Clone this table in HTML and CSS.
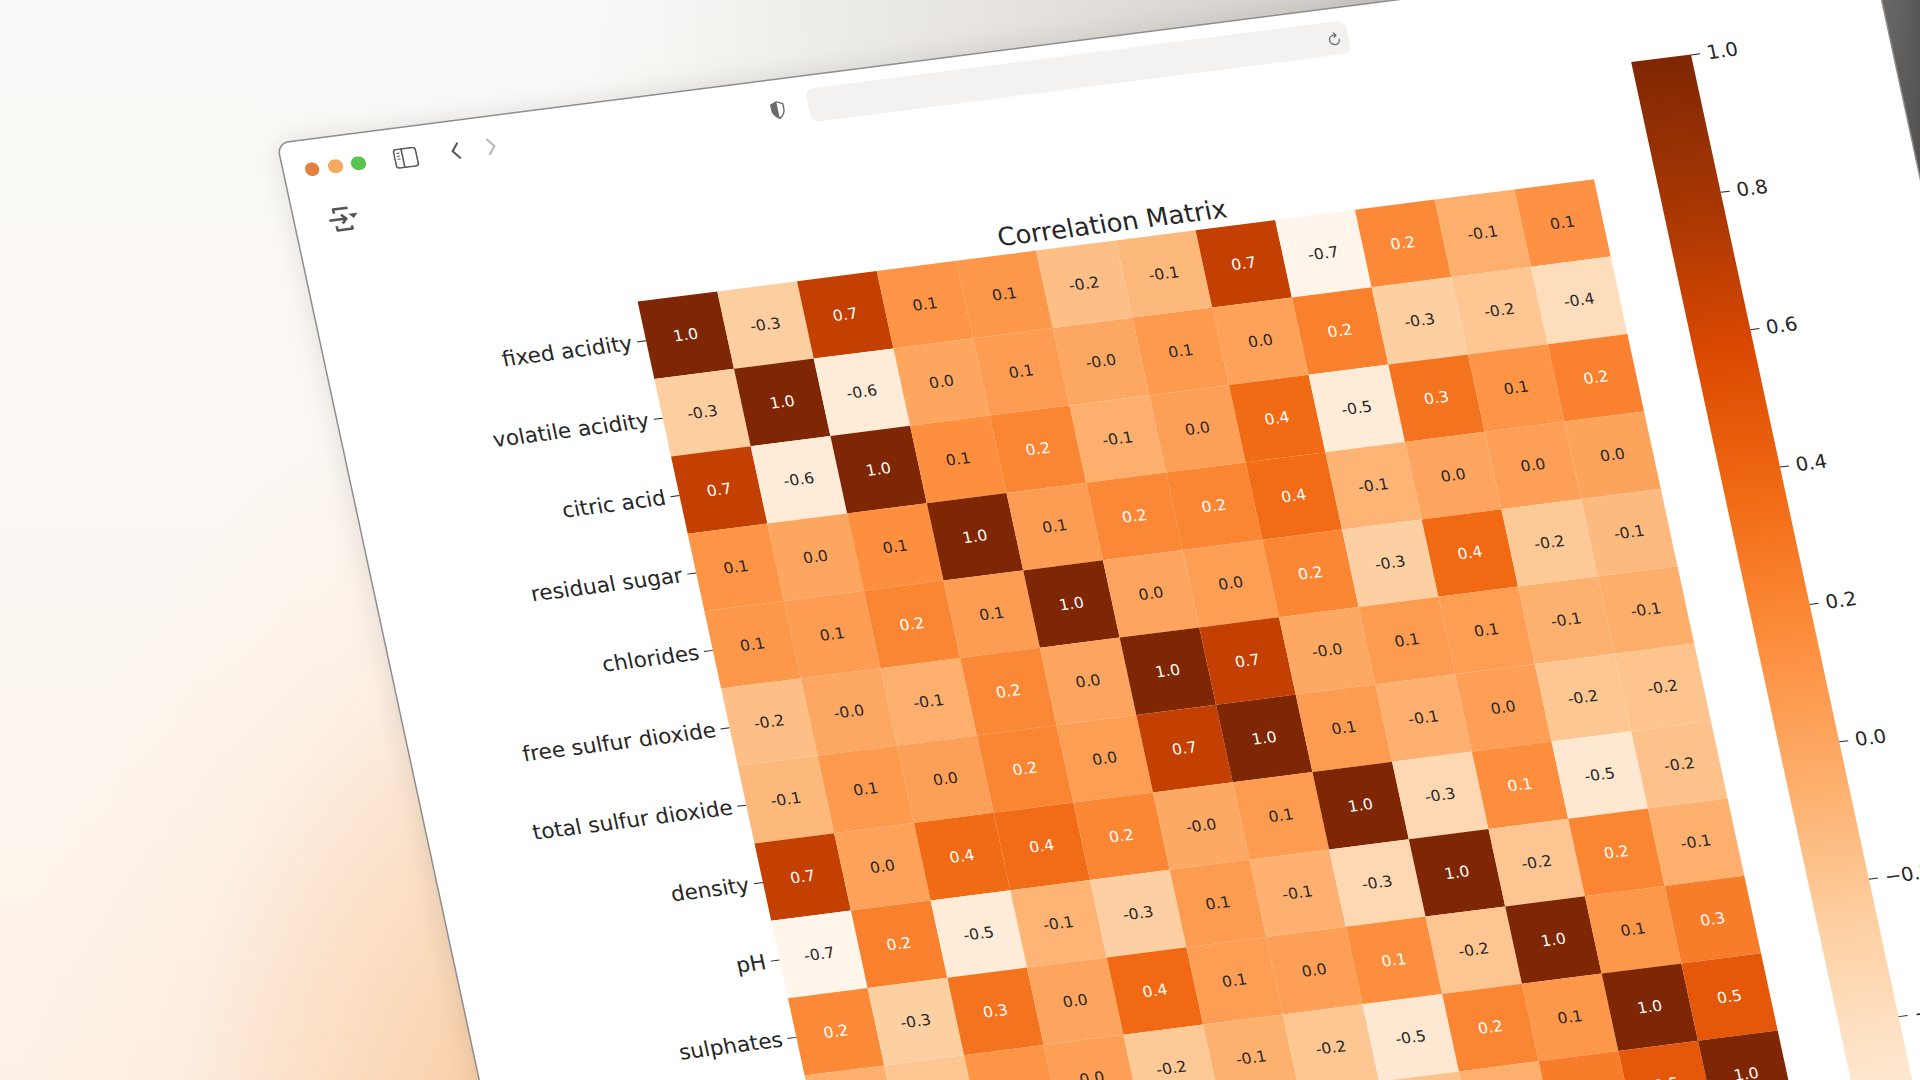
FILE: index.html
```html
<!DOCTYPE html>
<html lang="en">
<head>
<meta charset="utf-8">
<title>Correlation Matrix</title>
<link rel="stylesheet" href="styles.css">
</head>
<body>
<div class="window">
  <div class="toolbar">
    <div class="lights"><span class="dot red"></span><span class="dot yellow"></span><span class="dot green"></span></div>
    <svg class="tb-sidebar" width="24" height="21" viewBox="0 0 24 21"><rect x="1" y="1" width="22" height="19" rx="3" fill="none" stroke="#5a5a5a" stroke-width="1.6"/><line x1="9" y1="1" x2="9" y2="20" stroke="#5a5a5a" stroke-width="1.6"/><path d="M3.5 5h3M3.5 8h3M3.5 11h3" stroke="#5a5a5a" stroke-width="1.1"/></svg>
    <svg class="tb-back" width="12" height="20" viewBox="0 0 12 20"><path d="M9 2.5 L3 10 L9 17.5" fill="none" stroke="#555" stroke-width="2" stroke-linecap="round" stroke-linejoin="round"/></svg>
    <svg class="tb-fwd" width="12" height="20" viewBox="0 0 12 20"><path d="M3 2.5 L9 10 L3 17.5" fill="none" stroke="#b8b8b8" stroke-width="2" stroke-linecap="round" stroke-linejoin="round"/></svg>
    <svg class="tb-shield" width="15" height="19" viewBox="0 0 15 19"><path d="M7.5 1 L13.5 3.5 V9 C13.5 13 10.8 16 7.5 18 C4.2 16 1.5 13 1.5 9 V3.5 Z" fill="none" stroke="#6a6a6a" stroke-width="1.4" stroke-linejoin="round"/><path d="M7.5 1 L1.5 3.5 V9 C1.5 13 4.2 16 7.5 18 Z" fill="#6a6a6a"/></svg>
    <div class="urlbar">
      <svg class="tb-reload" width="16" height="17" viewBox="0 0 16 17"><path d="M12.6 9.5 A4.8 4.8 0 1 1 7.8 4.7 H9.6" fill="none" stroke="#707070" stroke-width="1.4" stroke-linecap="round"/><path d="M8.2 2.4 L10.3 4.7 L8.2 7" fill="none" stroke="#707070" stroke-width="1.4" stroke-linecap="round" stroke-linejoin="round"/></svg>
    </div>
  </div>
  <div class="page">
    <svg class="menu-icon" width="32" height="28" viewBox="0 0 32 28"><path d="M8 7.5 V3.2 H22.5" fill="none" stroke="#555" stroke-width="2.6" stroke-linejoin="round"/><path d="M2 14 H19 M14.5 9.5 L19 14 L14.5 18.5" fill="none" stroke="#555" stroke-width="2.6" stroke-linejoin="round"/><path d="M22 9.5 H31 L26.5 14.5 Z" fill="#555"/><path d="M8 20.5 V24.8 H23 V21.5" fill="none" stroke="#555" stroke-width="2.6" stroke-linejoin="round"/></svg>
    <div class="axes">
      <div class="title">Correlation Matrix</div>
      <div class="heat">
        <div class="ylabels">
          <div class="ylab">fixed acidity</div>
          <div class="ylab">volatile acidity</div>
          <div class="ylab">citric acid</div>
          <div class="ylab">residual sugar</div>
          <div class="ylab">chlorides</div>
          <div class="ylab">free sulfur dioxide</div>
          <div class="ylab">total sulfur dioxide</div>
          <div class="ylab">density</div>
          <div class="ylab">pH</div>
          <div class="ylab">sulphates</div>
          <div class="ylab">alcohol</div>
          <div class="ylab">quality</div>
        </div>
        <div class="grid">
          <div class="cell" data-v="1">1.0</div><div class="cell" data-v="-0.256">-0.3</div><div class="cell" data-v="0.672">0.7</div><div class="cell" data-v="0.115">0.1</div><div class="cell" data-v="0.094">0.1</div><div class="cell" data-v="-0.154">-0.2</div><div class="cell" data-v="-0.113">-0.1</div><div class="cell" data-v="0.668">0.7</div><div class="cell" data-v="-0.683">-0.7</div><div class="cell" data-v="0.183">0.2</div><div class="cell" data-v="-0.062">-0.1</div><div class="cell" data-v="0.124">0.1</div>
          <div class="cell" data-v="-0.256">-0.3</div><div class="cell" data-v="1">1.0</div><div class="cell" data-v="-0.552">-0.6</div><div class="cell" data-v="0.002">0.0</div><div class="cell" data-v="0.061">0.1</div><div class="cell" data-v="-0.011">-0.0</div><div class="cell" data-v="0.076">0.1</div><div class="cell" data-v="0.022">0.0</div><div class="cell" data-v="0.235">0.2</div><div class="cell" data-v="-0.261">-0.3</div><div class="cell" data-v="-0.202">-0.2</div><div class="cell" data-v="-0.391">-0.4</div>
          <div class="cell" data-v="0.672">0.7</div><div class="cell" data-v="-0.552">-0.6</div><div class="cell" data-v="1">1.0</div><div class="cell" data-v="0.144">0.1</div><div class="cell" data-v="0.204">0.2</div><div class="cell" data-v="-0.061">-0.1</div><div class="cell" data-v="0.036">0.0</div><div class="cell" data-v="0.365">0.4</div><div class="cell" data-v="-0.542">-0.5</div><div class="cell" data-v="0.313">0.3</div><div class="cell" data-v="0.110">0.1</div><div class="cell" data-v="0.226">0.2</div>
          <div class="cell" data-v="0.115">0.1</div><div class="cell" data-v="0.002">0.0</div><div class="cell" data-v="0.144">0.1</div><div class="cell" data-v="1">1.0</div><div class="cell" data-v="0.056">0.1</div><div class="cell" data-v="0.187">0.2</div><div class="cell" data-v="0.203">0.2</div><div class="cell" data-v="0.355">0.4</div><div class="cell" data-v="-0.086">-0.1</div><div class="cell" data-v="0.006">0.0</div><div class="cell" data-v="0.042">0.0</div><div class="cell" data-v="0.014">0.0</div>
          <div class="cell" data-v="0.094">0.1</div><div class="cell" data-v="0.061">0.1</div><div class="cell" data-v="0.204">0.2</div><div class="cell" data-v="0.056">0.1</div><div class="cell" data-v="1">1.0</div><div class="cell" data-v="0.006">0.0</div><div class="cell" data-v="0.047">0.0</div><div class="cell" data-v="0.201">0.2</div><div class="cell" data-v="-0.265">-0.3</div><div class="cell" data-v="0.371">0.4</div><div class="cell" data-v="-0.221">-0.2</div><div class="cell" data-v="-0.129">-0.1</div>
          <div class="cell" data-v="-0.154">-0.2</div><div class="cell" data-v="-0.011">-0.0</div><div class="cell" data-v="-0.061">-0.1</div><div class="cell" data-v="0.187">0.2</div><div class="cell" data-v="0.006">0.0</div><div class="cell" data-v="1">1.0</div><div class="cell" data-v="0.668">0.7</div><div class="cell" data-v="-0.022">-0.0</div><div class="cell" data-v="0.070">0.1</div><div class="cell" data-v="0.052">0.1</div><div class="cell" data-v="-0.069">-0.1</div><div class="cell" data-v="-0.051">-0.1</div>
          <div class="cell" data-v="-0.113">-0.1</div><div class="cell" data-v="0.076">0.1</div><div class="cell" data-v="0.036">0.0</div><div class="cell" data-v="0.203">0.2</div><div class="cell" data-v="0.047">0.0</div><div class="cell" data-v="0.668">0.7</div><div class="cell" data-v="1">1.0</div><div class="cell" data-v="0.071">0.1</div><div class="cell" data-v="-0.066">-0.1</div><div class="cell" data-v="0.043">0.0</div><div class="cell" data-v="-0.206">-0.2</div><div class="cell" data-v="-0.185">-0.2</div>
          <div class="cell" data-v="0.668">0.7</div><div class="cell" data-v="0.022">0.0</div><div class="cell" data-v="0.365">0.4</div><div class="cell" data-v="0.355">0.4</div><div class="cell" data-v="0.201">0.2</div><div class="cell" data-v="-0.022">-0.0</div><div class="cell" data-v="0.071">0.1</div><div class="cell" data-v="1">1.0</div><div class="cell" data-v="-0.342">-0.3</div><div class="cell" data-v="0.149">0.1</div><div class="cell" data-v="-0.496">-0.5</div><div class="cell" data-v="-0.175">-0.2</div>
          <div class="cell" data-v="-0.683">-0.7</div><div class="cell" data-v="0.235">0.2</div><div class="cell" data-v="-0.542">-0.5</div><div class="cell" data-v="-0.086">-0.1</div><div class="cell" data-v="-0.265">-0.3</div><div class="cell" data-v="0.070">0.1</div><div class="cell" data-v="-0.066">-0.1</div><div class="cell" data-v="-0.342">-0.3</div><div class="cell" data-v="1">1.0</div><div class="cell" data-v="-0.197">-0.2</div><div class="cell" data-v="0.206">0.2</div><div class="cell" data-v="-0.058">-0.1</div>
          <div class="cell" data-v="0.183">0.2</div><div class="cell" data-v="-0.261">-0.3</div><div class="cell" data-v="0.313">0.3</div><div class="cell" data-v="0.006">0.0</div><div class="cell" data-v="0.371">0.4</div><div class="cell" data-v="0.052">0.1</div><div class="cell" data-v="0.043">0.0</div><div class="cell" data-v="0.149">0.1</div><div class="cell" data-v="-0.197">-0.2</div><div class="cell" data-v="1">1.0</div><div class="cell" data-v="0.094">0.1</div><div class="cell" data-v="0.251">0.3</div>
          <div class="cell" data-v="-0.062">-0.1</div><div class="cell" data-v="-0.202">-0.2</div><div class="cell" data-v="0.110">0.1</div><div class="cell" data-v="0.042">0.0</div><div class="cell" data-v="-0.221">-0.2</div><div class="cell" data-v="-0.069">-0.1</div><div class="cell" data-v="-0.206">-0.2</div><div class="cell" data-v="-0.496">-0.5</div><div class="cell" data-v="0.206">0.2</div><div class="cell" data-v="0.094">0.1</div><div class="cell" data-v="1">1.0</div><div class="cell" data-v="0.476">0.5</div>
          <div class="cell" data-v="0.124">0.1</div><div class="cell" data-v="-0.391">-0.4</div><div class="cell" data-v="0.226">0.2</div><div class="cell" data-v="0.014">0.0</div><div class="cell" data-v="-0.129">-0.1</div><div class="cell" data-v="-0.051">-0.1</div><div class="cell" data-v="-0.185">-0.2</div><div class="cell" data-v="-0.175">-0.2</div><div class="cell" data-v="-0.058">-0.1</div><div class="cell" data-v="0.251">0.3</div><div class="cell" data-v="0.476">0.5</div><div class="cell" data-v="1">1.0</div>
        </div>
      </div>
    </div>
    <div class="cbar">
      <div class="cbar-bar"></div>
      <div class="cbar-ticks">
        <div class="ctick">1.0</div>
        <div class="ctick">0.8</div>
        <div class="ctick">0.6</div>
        <div class="ctick">0.4</div>
        <div class="ctick">0.2</div>
        <div class="ctick">0.0</div>
        <div class="ctick">−0.2</div>
        <div class="ctick">−0.4</div>
        <div class="ctick">−0.6</div>
      </div>
    </div>
  </div>
</div>
<script src="script.js"></script>
</body>
</html>
```

FILE: styles.css
```css
html, body {
  margin: 0;
  padding: 0;
}
html {
  overflow: hidden;
}
body {
  width: 1920px;
  height: 1080px;
  overflow: hidden;
  font-family: "DejaVu Sans", "Liberation Sans", sans-serif;
  background:
    radial-gradient(ellipse 560px 840px at 560px 1190px, rgba(249,198,150,1) 0%, rgba(251,216,184,.85) 40%, rgba(253,234,218,.5) 70%, rgba(253,245,238,0) 100%),
    linear-gradient(to right, rgba(255,255,255,0) 30%, rgba(190,184,178,.6) 68%, rgba(130,127,124,.92) 96%, #585654 100%),
    linear-gradient(to bottom, #fbfaf8 0%, #fcf7f2 55%, #fdf1e7 100%);
}

.window {
  width: 1596px;
  height: 1400px;
  background: #fff;
  border-radius: 11px;
  box-shadow: 0 0 0 1.5px #8e8e8e, 0 0 30px rgba(0,0,0,.12);
  transform-origin: 0 0;
  transform: matrix(0.99625, -0.1275, 0.20875, 0.9675, 278, 143.8);
}

/* toolbar */
.toolbar {
  height: 60px;
  display: flex;
  align-items: center;
  padding-left: 20.9px;
}
.lights {
  display: flex;
  gap: 8.6px;
}
.dot {
  width: 14.6px;
  height: 14.6px;
  border-radius: 50%;
}
.dot.red { background: #e2803f; }
.dot.yellow { background: #f4a862; }
.dot.green { background: #5bc451; }
.toolbar svg { flex-shrink: 0; display: block; }
.tb-sidebar { margin-left: 28.1px; }
.tb-back { margin-left: 32px; }
.tb-fwd { margin-left: 24px; }
.tb-shield { margin-left: 274.1px; }
.urlbar {
  margin-left: 22.9px;
  width: 542px;
  height: 34px;
  border-radius: 8px;
  background: #f3f2f0;
  display: flex;
  align-items: center;
  justify-content: flex-end;
  padding-right: 6px;
  box-sizing: border-box;
}

/* page */
.page {
  display: flex;
  align-items: flex-start;
}
.page > * { flex-shrink: 0; }
.menu-icon {
  display: block;
  margin-left: 32.4px;
  margin-top: 10px;
}
.axes {
  margin-left: 15.6px;
  margin-top: 112px;
  color: #262626;
}
.title {
  margin-left: 238px;
  width: 960px;
  text-align: center;
  font-size: 25.6px;
  line-height: 31px;
  margin-bottom: 2.4px;
  white-space: nowrap;
}
.heat {
  display: flex;
}
.ylabels {
  width: 238px;
  display: flex;
  flex-direction: column;
}
.ylab {
  height: 80px;
  display: flex;
  align-items: center;
  justify-content: flex-end;
  font-size: 21.4px;
  white-space: nowrap;
}
.ylab::after {
  content: "";
  width: 9px;
  height: 1.6px;
  background: #262626;
  margin-left: 5px;
}
.grid {
  display: grid;
  grid-template-columns: repeat(12, 80px);
  grid-auto-rows: 80px;
}
.cell {
  display: flex;
  align-items: center;
  justify-content: center;
  font-size: 15.5px;
  color: #262626;
  background: #fd8d3c;
}
.cell.on-dark {
  color: #fff;
}

/* colorbar */
.cbar {
  display: flex;
  margin-left: 61.4px;
  margin-top: 32.4px;
  color: #262626;
}
.cbar-bar {
  width: 59.6px;
  height: 1195px;
  background: linear-gradient(to top, #fff5eb 0%, #fee6ce 12.5%, #fdd0a2 25%, #fdae6b 37.5%, #fd8d3c 50%, #f16913 62.5%, #d94801 75%, #a63603 87.5%, #7f2704 100%);
}
.cbar-ticks {
  display: flex;
  flex-direction: column;
  margin-top: -71px;
}
.ctick {
  height: 142px;
  display: flex;
  align-items: center;
  font-size: 19.5px;
  white-space: nowrap;
}
.ctick::before {
  content: "";
  width: 9px;
  height: 1.6px;
  background: #262626;
  margin-right: 7px;
}
```

FILE: script.js
```js
(function () {
  var stops = [
    [255, 245, 235], [254, 230, 206], [253, 208, 162], [253, 174, 107],
    [253, 141, 60], [241, 105, 19], [217, 72, 1], [166, 54, 3], [127, 39, 4]
  ];
  var vmin = -0.683, vmax = 1;
  function cmap(t) {
    t = Math.max(0, Math.min(1, t));
    var p = t * 8;
    var i = Math.min(7, Math.floor(p));
    var f = p - i;
    var out = [];
    for (var k = 0; k < 3; k++) {
      out.push(Math.round(stops[i][k] + (stops[i + 1][k] - stops[i][k]) * f));
    }
    return out;
  }
  function lin(c) {
    c = c / 255;
    return c <= 0.03928 ? c / 12.92 : Math.pow((c + 0.055) / 1.055, 2.4);
  }
  var cells = document.querySelectorAll('.cell');
  for (var n = 0; n < cells.length; n++) {
    var el = cells[n];
    var v = parseFloat(el.getAttribute('data-v'));
    var rgb = cmap((v - vmin) / (vmax - vmin));
    el.style.backgroundColor = 'rgb(' + rgb[0] + ',' + rgb[1] + ',' + rgb[2] + ')';
    var lum = 0.2126 * lin(rgb[0]) + 0.7152 * lin(rgb[1]) + 0.0722 * lin(rgb[2]);
    if (lum <= 0.408) el.classList.add('on-dark');
  }
})();
```
